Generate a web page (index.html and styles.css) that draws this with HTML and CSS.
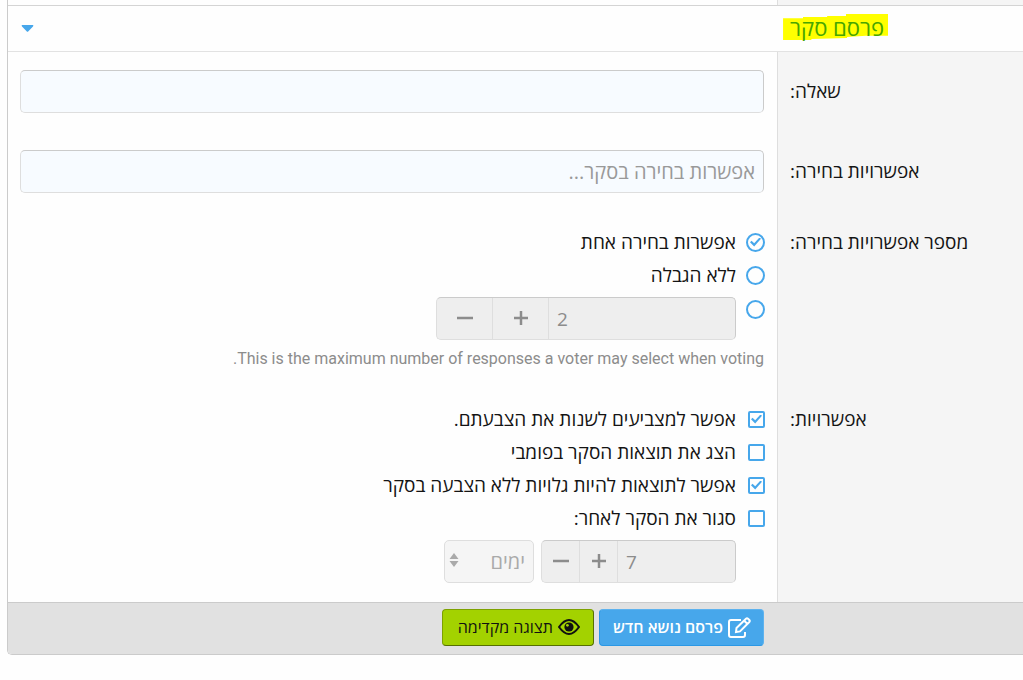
FILE: index.html
```html
<!DOCTYPE html>
<html lang="he" dir="rtl">
<head>
<meta charset="utf-8">
<title>פרסם סקר</title>
<link rel="stylesheet" href="styles.css">
</head>
<body>
<form class="panel">
  <div class="row row-previous"><div class="label-cell"></div><div class="field-cell"></div></div>
  <header class="panel-header">
    <h2 class="panel-title"><span>פרסם סקר</span></h2>
    <button class="toggle" type="button" aria-label="כווץ"><svg width="13" height="8" viewBox="0 0 13 8"><path d="M1.200 0H11.800Q13 .3 12 1.500L7.400 6.300Q6.500 7.300 5.600 6.300L1 1.500Q0 .3 1.200 0Z" fill="#47a7eb"/></svg></button>
  </header>
  <div class="row">
    <div class="label-cell"><label class="label-tall" for="question">שאלה:</label></div>
    <div class="field-cell"><input class="text-input" id="question" type="text"></div>
  </div>
  <div class="row">
    <div class="label-cell"><label class="label-tall" for="choice">אפשרויות בחירה:</label></div>
    <div class="field-cell"><input class="text-input" id="choice" type="text" placeholder="אפשרות בחירה בסקר..."></div>
  </div>
  <div class="row">
    <div class="label-cell label-cell-options"><span class="label-line" id="max-label">מספר אפשרויות בחירה:</span></div>
    <div class="field-cell options" role="radiogroup" aria-labelledby="max-label">
      <label class="option"><input class="mark radio" type="radio" name="max" checked><span>אפשרות בחירה אחת</span></label>
      <label class="option"><input class="mark radio" type="radio" name="max"><span>ללא הגבלה</span></label>
      <div class="option option-stepper">
        <input class="mark radio" type="radio" name="max" aria-label="מספר מרבי">
        <div class="stepper stepper-wide">
          <input class="stepper-value" type="text" value="2" aria-label="מספר מרבי" disabled>
          <button class="step" type="button" aria-label="הוסף" disabled><svg width="16" height="17"><path d="M8 1V15M1 8H15" stroke="currentColor" stroke-width="2.500"/></svg></button>
          <button class="step" type="button" aria-label="הפחת" disabled><svg width="16" height="17"><path d="M0 8H16" stroke="currentColor" stroke-width="2.500"/></svg></button>
        </div>
      </div>
      <p class="hint">This is the maximum number of responses a voter may select when voting.</p>
    </div>
  </div>
  <div class="row">
    <div class="label-cell label-cell-options"><span class="label-line" id="opt-label">אפשרויות:</span></div>
    <div class="field-cell options" role="group" aria-labelledby="opt-label">
      <label class="option"><input class="mark check" type="checkbox" checked><span>אפשר למצביעים לשנות את הצבעתם.</span></label>
      <label class="option"><input class="mark check" type="checkbox"><span>הצג את תוצאות הסקר בפומבי</span></label>
      <label class="option"><input class="mark check" type="checkbox" checked><span>אפשר לתוצאות להיות גלויות ללא הצבעה בסקר</span></label>
      <label class="option"><input class="mark check" type="checkbox"><span>סגור את הסקר לאחר:</span></label>
      <div class="close-after">
        <div class="stepper stepper-narrow">
          <input class="stepper-value" type="text" value="7" aria-label="סגור לאחר" disabled>
          <button class="step" type="button" aria-label="הוסף" disabled><svg width="16" height="17"><path d="M8 1V15M1 8H15" stroke="currentColor" stroke-width="2.500"/></svg></button>
          <button class="step" type="button" aria-label="הפחת" disabled><svg width="16" height="17"><path d="M0 8H16" stroke="currentColor" stroke-width="2.500"/></svg></button>
        </div>
        <div class="unit">
          <select class="unit-select" aria-label="יחידת זמן" disabled><option>ימים</option></select>
          <svg class="unit-arrows" width="10" height="14" viewBox="0 0 10 14"><path d="M5 0L9.500 6H.5ZM5 14L.5 8H9.500Z" fill="#aaa"/></svg>
        </div>
      </div>
    </div>
  </div>
  <footer class="panel-footer">
    <button class="button button-primary" type="submit">
      <svg width="23" height="21" viewBox="0 0 23 21" fill="none" stroke="#fff" stroke-width="2"><path d="M13 3H3Q1 3 1 5V18Q1 20 3 20H15Q17 20 17 18V15"/><path d="M8 15L8.500 11L18 1.700Q19 .8 20 1.700L21.300 3Q22.200 4 21.300 5L12 14.400ZM16 3.500L19.500 7"/></svg>
      <span>פרסם נושא חדש</span>
    </button>
    <button class="button button-preview" type="button">
      <svg width="22" height="16" viewBox="0 0 22 16"><path d="M1 8Q11-6 21 8Q11 22 1 8Z" fill="none" stroke="#111" stroke-width="2"/><circle cx="11" cy="8" r="4.600" fill="#111"/><circle cx="9.400" cy="6.300" r="1.400" fill="#a3d200"/></svg>
      <span>תצוגה מקדימה</span>
    </button>
  </footer>
</form>
</body>
</html>
```
FILE: styles.css
```css
* { box-sizing: border-box; }
body {
  margin: 0;
  background: #fefefe;
  color: #141414;
  font: 19px/28px "Open Sans", "Noto Sans", sans-serif;
}
button, input, select { font: inherit; margin: 0; }
svg { display: block; flex: none; }
.panel {
  margin-left: 7px;
  border: solid #cbcbcb;
  border-width: 0 0 1px 1px;
  border-bottom-left-radius: 5px;
  overflow: hidden;
}
.row { display: grid; grid-template-columns: 246px minmax(0, 1fr); }
.row-previous { height: 5px; }
.label-cell {
  display: flex;
  justify-content: flex-end;
  padding: 17px 12px 0;
  background: #f5f5f5;
  border-left: 1px solid #dedede;
}
.label-cell-options { padding-top: 16px; }
.field-cell { padding: 18px 13px 19px 12px; }
.row-previous > div { padding: 0; }
.label-tall { line-height: 44px; }
.label-line { line-height: 28px; }
.panel-header {
  display: flex;
  align-items: center;
  justify-content: space-between;
  height: 47px;
  padding: 0 135px 0 13px;
  border-top: 1px solid #d4d4d4;
  border-bottom: 1px solid #e2e2e2;
}
.panel-title {
  position: relative;
  margin: 0;
  padding: 0 4px 2px 7px;
  font-size: 22px;
  font-weight: 400;
  line-height: 25px;
  color: #47a600;
}
.panel-title::before {
  content: "";
  position: absolute;
  inset: -1px 0 2px;
  background: #ff0;
  clip-path: polygon(0 16%, 19% 16%, 19% 12%, 42% 12%, 42% 8%, 60% 8%, 60% 0, 100% 0, 100% 84%, 79% 84%, 61% 88%, 61% 92%, 27% 96%, 27% 100%, 0 100%);
}
.panel-title span { position: relative; }
.toggle { padding: 0; border: 0; background: none; }
.text-input {
  display: block;
  width: 100%;
  height: 43px;
  padding: 0 8px;
  border: 1px solid #dedede;
  border-top-color: #cbcbcb;
  border-right-color: #cbcbcb;
  border-radius: 5px;
  background: #f7fbff;
  font-size: 20px;
}
.text-input::placeholder { color: #999; opacity: 1; }
.options { display: flex; flex-direction: column; gap: 5px; padding-top: 16px; padding-right: 12px; }
.option { display: flex; align-items: center; gap: 10px; }
.option-stepper { align-items: flex-start; padding-top: 3px; }
.option-stepper .mark { margin-top: 3px; }
.mark {
  appearance: none;
  flex: none;
  display: grid;
  place-items: center;
  width: 19px;
  height: 19px;
  border: 2px solid #47a7eb;
  background: #fefefe;
}
.radio { border-radius: 50%; }
.check { width: 17px; height: 17px; margin: 0 0 0 2px; border-radius: 2px; }
.mark:checked::before {
  content: "";
  width: 11px;
  height: 9px;
  background: #47a7eb;
  clip-path: polygon(0 52%, 14% 36%, 38% 64%, 86% 0, 100% 14%, 38% 100%);
}
.stepper {
  display: flex;
  height: 43px;
  border: 1px solid #dedede;
  border-top-color: #cbcbcb;
  border-right-color: #cbcbcb;
  border-radius: 5px;
  background: #eee;
  color: #8c8c8c;
  overflow: hidden;
}
.stepper-wide { width: 300px; }
.stepper-narrow { width: 195px; }
.stepper-value {
  flex: 1;
  min-width: 0;
  padding: 0 8px;
  border: 0;
  background: none;
  color: inherit;
  direction: ltr;
}
.step {
  display: grid;
  place-items: center;
  width: 56px;
  padding: 0;
  border: 0;
  border-right: 1px solid #dedede;
  background: none;
  color: #8c8c8c;
}
.stepper-narrow .step { width: 38px; }
.hint {
  margin: 3px 0 0;
  padding-right: 1px;
  color: #8c8c8c;
  font: 16px/22px Roboto, sans-serif;
}
.close-after { display: flex; gap: 7px; padding: 3px 29px 0 0; }
.unit { position: relative; width: 90px; }
.unit-select {
  appearance: none;
  display: block;
  width: 100%;
  height: 43px;
  padding: 0 8px;
  border: 1px solid #dedede;
  border-radius: 5px;
  background: #f5f5f5;
  color: #aaa;
  font-size: 20px;
  opacity: 1;
}
.unit-arrows { position: absolute; left: 5px; top: 13px; }
.panel-footer {
  display: flex;
  gap: 5px;
  padding: 6px 259px 8px 12px;
  border-top: 1px solid #cbcbcb;
  background: #e1e1e1;
}
.button {
  display: flex;
  align-items: center;
  gap: 5px;
  height: 37px;
  padding: 0 12px 1px 13px;
  border: 1px solid;
  border-radius: 4px;
  font-size: 16px;
  white-space: nowrap;
}
.button-primary {
  border-color: #5db2ee #5db2ee #2b98e5 #2b98e5;
  background: #47a7eb;
  color: #fff;
  font-weight: 600;
}
.button-preview {
  padding-right: 13px;
  padding-left: 15px;
  border-color: #7da100 #567000 #567000 #7da100;
  background: #a3d200;
  color: #111;
}
```
